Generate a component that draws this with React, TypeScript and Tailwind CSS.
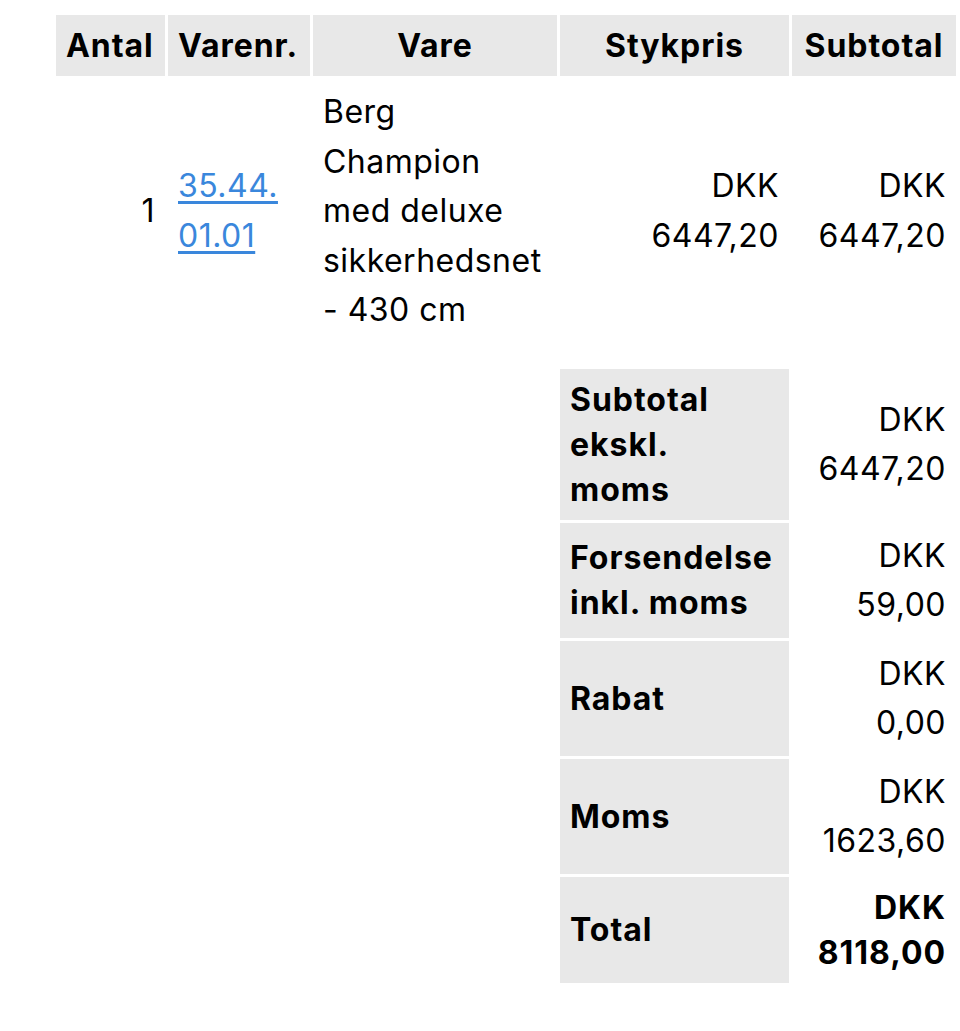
const th = "bg-[#e8e8e8] px-[10px] py-2 font-bold leading-[45px] tracking-[0.03em]";
const td = "px-[10px] py-2 leading-[49.5px] tracking-[0.015em]";

const summary = [
	{ label: ["Subtotal", "ekskl.", "moms"], value: ["DKK", "6447,20"] },
	{ label: ["Forsendelse", "inkl. moms"], value: ["DKK", "59,00"] },
	{ label: ["Rabat"], value: ["DKK", "0,00"] },
	{ label: ["Moms"], value: ["DKK", "1623,60"] },
];

function Lines({ lines }: { lines: string[] }) {
	return (
		<>
			{lines.map((l, i) => (
				<span key={i} className="block">
					{l}
				</span>
			))}
		</>
	);
}

export default function App() {
	return (
		<div
			className="min-h-screen bg-white pt-[12px] pl-[53px] text-[32px] text-black"
			style={{ fontFamily: "Inter, 'Noto Sans', sans-serif" }}
		>
			<table className="table-fixed border-separate border-spacing-[3px] w-[906px]">
				<colgroup>
					<col className="w-[109px]" />
					<col className="w-[142px]" />
					<col className="w-[244px]" />
					<col className="w-[229px]" />
					<col className="w-[164px]" />
				</colgroup>
				<thead>
					<tr>
						<th className={th + " text-left"}>Antal</th>
						<th className={th + " text-left"}>Varenr.</th>
						<th className={th + " text-center"}>Vare</th>
						<th className={th + " text-center"}>Stykpris</th>
						<th className={th + " text-center"}>Subtotal</th>
					</tr>
				</thead>
				<tbody>
					<tr>
						<td className={td + " text-right align-middle"}>1</td>
						<td className={td + " align-middle"}>
							<a href="#" className="text-[#3a87dc] underline underline-offset-4">
								35.44.
								<br />
								01.01
							</a>
						</td>
						<td className={td + " align-middle"}>
							<Lines lines={["Berg", "Champion", "med deluxe", "sikkerhedsnet", "- 430 cm"]} />
						</td>
						<td className={td + " text-right align-middle"}>
							<Lines lines={["DKK", "6447,20"]} />
						</td>
						<td className={td + " text-right align-middle"}>
							<Lines lines={["DKK", "6447,20"]} />
						</td>
					</tr>
					<tr>
						<td colSpan={5} className="h-[20px] p-0" />
					</tr>
					{summary.map((row) => (
						<tr key={row.label.join(" ")}>
							<td colSpan={3} />
							<th className={th + " text-left align-middle"}>
								<Lines lines={row.label} />
							</th>
							<td className={td + " text-right align-middle"}>
								<Lines lines={row.value} />
							</td>
						</tr>
					))}
					<tr>
						<td colSpan={3} />
						<th className={th + " text-left align-middle"}>Total</th>
						<td className="px-[10px] py-2 text-right align-middle font-bold leading-[45px] tracking-[0.03em]">
							<Lines lines={["DKK", "8118,00"]} />
						</td>
					</tr>
				</tbody>
			</table>
		</div>
	);
}
